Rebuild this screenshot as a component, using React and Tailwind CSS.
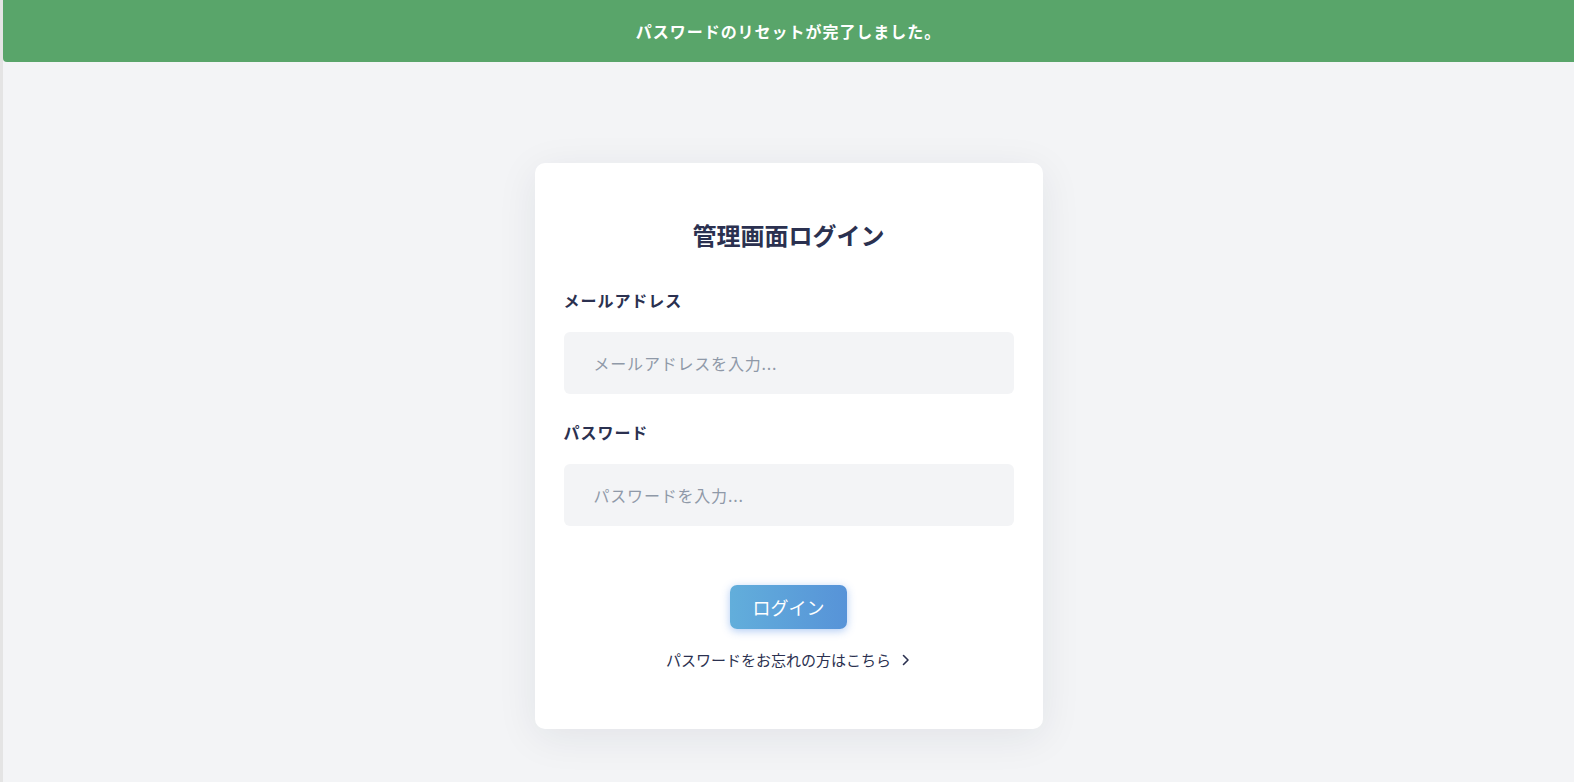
import { useState } from 'react'

const font = { fontFamily: '"Noto Sans CJK JP", "Noto Sans", sans-serif' }

function Banner({ message }) {
  return (
    <div className="h-[62px] bg-[#59a56a] rounded-bl-[4px] flex items-center justify-center">
      <p className="text-white text-[16px] font-bold tracking-[0.06em]">{message}</p>
    </div>
  )
}

function Field({ label, type, placeholder, value, onChange, className }) {
  return (
    <div className={className}>
      <label className="block h-[24px] leading-[24px] text-[16px] font-bold tracking-[0.06em] text-[#2b3150] mb-[20px]">
        {label}
      </label>
      <input
        type={type}
        value={value}
        onChange={(e) => onChange(e.target.value)}
        placeholder={placeholder}
        className="block w-full h-[62px] rounded-[6px] bg-[#f3f4f6] pl-[30px] pr-4 text-[16px] tracking-[0.05em] text-[#2b3150] placeholder:text-[#8f99a8] outline-none"
      />
    </div>
  )
}

export default function App() {
  const [email, setEmail] = useState('')
  const [password, setPassword] = useState('')

  return (
    <div className="flex min-h-[782px] bg-[#f3f4f6]" style={font}>
      <div className="w-[3px] bg-[#e4e4e4]"></div>
      <div className="flex-1 flex flex-col">
        <Banner message="パスワードのリセットが完了しました。" />
        <div className="flex justify-center pt-[101px]">
          <form
            onSubmit={(e) => e.preventDefault()}
            className="w-[508px] bg-white rounded-[10px] shadow-[0_8px_40px_rgba(30,40,60,0.08)] pt-[56px] px-[29px] pb-[59px]"
          >
            <h1 className="text-center text-[24px] leading-[32px] font-bold text-[#2b3150]">管理画面ログイン</h1>
            <Field
              className="mt-[37px]"
              label="メールアドレス"
              type="email"
              placeholder="メールアドレスを入力..."
              value={email}
              onChange={setEmail}
            />
            <Field
              className="mt-[26px]"
              label="パスワード"
              type="password"
              placeholder="パスワードを入力..."
              value={password}
              onChange={setPassword}
            />
            <div className="flex justify-center mt-[59px]">
              <button
                type="submit"
                className="w-[117px] h-[44px] rounded-[7px] bg-gradient-to-r from-[#62aedb] to-[#5793d8] text-white text-[18px] shadow-[0_2px_8px_rgba(80,140,230,0.45)]"
              >
                ログイン
              </button>
            </div>
            <div className="flex justify-center mt-[21px]">
              <button type="button" className="flex items-center h-[20px] text-[15px] text-[#2b3150]">
                パスワードをお忘れの方はこちら
                <svg className="ml-[10px]" width="10" height="12" viewBox="0 0 10 12" fill="none">
                  <path d="M2.5 1.5 L7 6 L2.5 10.5" stroke="#2b3150" strokeWidth="1.6" strokeLinecap="round" strokeLinejoin="round" />
                </svg>
              </button>
            </div>
          </form>
        </div>
      </div>
    </div>
  )
}
